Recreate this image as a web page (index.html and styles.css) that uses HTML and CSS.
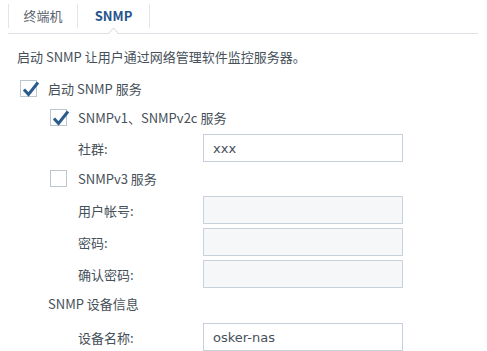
FILE: index.html
```html
<!DOCTYPE html>
<html lang="zh-CN">
<head>
    <meta charset="UTF-8">
    <title>SNMP</title>
    <link rel="stylesheet" href="styles.css">
</head>
<body>

<div class="tabs">
    <div class="tab tab-first">终端机</div>
    <div class="tab tab-active">SNMP</div>
</div>

<p class="desc">启动 SNMP 让用户通过网络管理软件监控服务器。</p>

<div class="row row-check level-1">
    <span class="box checked">
        <svg viewBox="0 0 20 20" width="20" height="20"><polyline points="3,9.5 7.5,14.5 17,2.5" fill="none" stroke="#2b5a8c" stroke-width="3" stroke-linejoin="miter"/></svg>
    </span>
    <span class="check-label">启动 SNMP 服务</span>
</div>

<div class="row row-check level-2">
    <span class="box checked">
        <svg viewBox="0 0 20 20" width="20" height="20"><polyline points="3,9.5 7.5,14.5 17,2.5" fill="none" stroke="#2b5a8c" stroke-width="3" stroke-linejoin="miter"/></svg>
    </span>
    <span class="check-label">SNMPv1、SNMPv2c 服务</span>
</div>

<div class="field field-first">
    <label class="field-label">社群:</label>
    <input class="text-input" type="text" value="xxx">
</div>

<div class="row row-check level-2 row-v3">
    <span class="box"></span>
    <span class="check-label">SNMPv3 服务</span>
</div>

<div class="field field-v3">
    <label class="field-label">用户帐号:</label>
    <input class="text-input" type="text" disabled>
</div>
<div class="field field-tight">
    <label class="field-label">密码:</label>
    <input class="text-input" type="password" disabled>
</div>
<div class="field field-tight">
    <label class="field-label">确认密码:</label>
    <input class="text-input" type="password" disabled>
</div>

<div class="row section">SNMP 设备信息</div>

<div class="field field-device">
    <label class="field-label">设备名称:</label>
    <input class="text-input" type="text" value="osker-nas">
</div>

</body>
</html>
```

FILE: styles.css
```css
body {
    margin: 0;
    background-color: #fff;
    font-family: "Noto Sans CJK SC", sans-serif;
    font-size: 13px;
    color: #465059;
}
.tabs {
    display: flex;
    margin: 0 9px 0 8px;
    padding-top: 4px;
    height: 29px;
    border-bottom: 1px solid #dde1e6;
}
.tab {
    position: relative;
    height: 24px;
    line-height: 24px;
    text-align: center;
    border-right: 1px solid #e2e6ea;
    color: #5a646e;
}
.tab-first {
    width: 68px;
    border-left: 1px solid #e2e6ea;
}
.tab-active {
    width: 71px;
    font-weight: bold;
    color: #27548a;
}
.tab-active::after {
    content: "";
    position: absolute;
    left: 32px;
    top: 25px;
    width: 6px;
    height: 6px;
    background: #fff;
    border-left: 1px solid #dde1e6;
    border-top: 1px solid #dde1e6;
    transform: rotate(45deg);
}
.desc {
    margin: 14px 0 0 17px;
    line-height: 18px;
}
.row {
    display: flex;
    align-items: center;
    height: 29px;
}
.level-1 {
    margin-top: 8px;
    padding-left: 20px;
}
.level-2 {
    padding-left: 50px;
}
.row-v3 {
    margin-top: 2px;
}
.box {
    position: relative;
    box-sizing: border-box;
    width: 17px;
    height: 17px;
    border: 1px solid #bcc6d1;
    background: #fff;
    flex: none;
}
.box svg {
    position: absolute;
    left: 0;
    top: -1px;
}
.check-label {
    margin-left: 11px;
}
.field {
    display: flex;
    align-items: center;
    padding-left: 78px;
    height: 28px;
}
.field-first {
    margin-top: 2px;
}
.field-v3 {
    margin-top: 3px;
}
.field-tight {
    margin-top: 4px;
}
.field-device {
    margin-top: 6px;
}
.field-label {
    width: 125px;
}
.text-input {
    box-sizing: border-box;
    width: 200px;
    height: 28px;
    margin: 0;
    padding: 0 9px;
    border: 1px solid #c6d0dc;
    border-radius: 0;
    font-family: "DejaVu Sans", "Noto Sans CJK SC", sans-serif;
    font-size: 13px;
    color: #465059;
    background: #fff;
    outline: none;
}
.text-input:disabled {
    background: #f5f7f9;
    border-color: #c9d2dc;
}
.section {
    margin-top: 1px;
    height: 28px;
    padding-left: 48px;
}
```
